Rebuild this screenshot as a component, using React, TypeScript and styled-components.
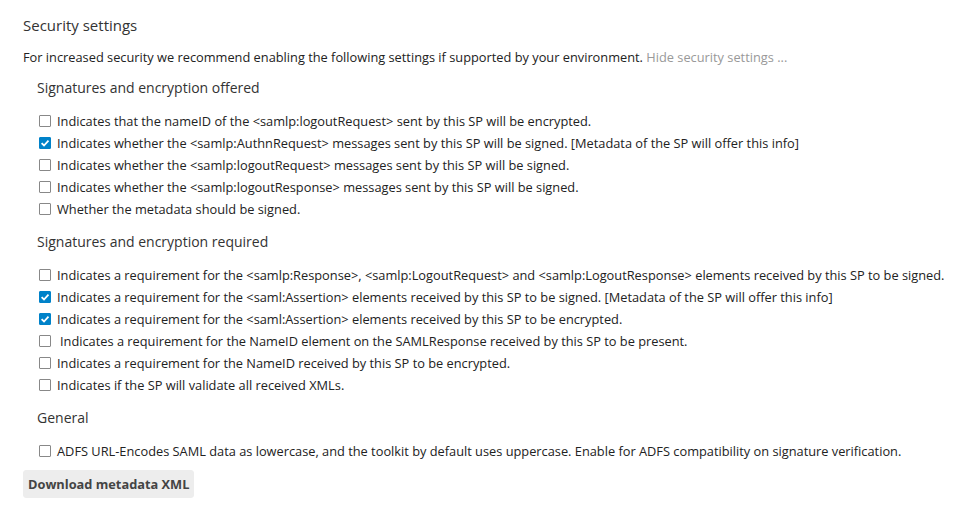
import React from "react";
import styled, { createGlobalStyle } from "styled-components";

const Global = createGlobalStyle`
  html, body { margin: 0; padding: 0; background: #fff; }
  body { font-family: "Open Sans", "Noto Sans", sans-serif; font-size: 12.8px; color: #222; }
`;

const Section = styled.div`
  padding: 14px 23px 0 23px;
`;

const Title = styled.h2`
  margin: 0 0 10px 0;
  font-size: 15px;
  font-weight: 400;
  line-height: 22px;
  color: #333;
`;

const Intro = styled.p`
  margin: 0 0 9px 0;
  line-height: 22px;
`;

const HideLink = styled.a`
  color: #999;
  text-decoration: none;
  cursor: pointer;
`;

const Group = styled.div`
  padding-left: 14px;
`;

const GroupTitle = styled.h3`
  margin: 0 0 11px 0;
  font-size: 14px;
  font-weight: 400;
  line-height: 22px;
  color: #333;
`;

const List = styled.div`
  display: flex;
  flex-direction: column;
  margin-bottom: 11px;
`;

const Row = styled.label`
  display: flex;
  align-items: center;
  height: 22px;
  padding-left: 2px;
  gap: 6px;
  white-space: nowrap;
`;

const Box = styled.span<{ $checked: boolean }>`
  flex: none;
  width: 12px;
  height: 12px;
  box-sizing: border-box;
  border: 1px solid ${(p) => (p.$checked ? "#0082c9" : "#888")};
  background: ${(p) => (p.$checked ? "#0082c9" : "#fff")};
  border-radius: 1px;
  display: flex;
  align-items: center;
  justify-content: center;
`;

const Text = styled.span<{ $indent?: boolean }>`
  padding-left: ${(p) => (p.$indent ? "3px" : "0")};
`;

const Button = styled.button`
  display: block;
  margin-top: -3px;
  font-family: inherit;
  font-size: 12.8px;
  font-weight: 700;
  color: #444;
  background: #ededed;
  border: 1px solid #ededed;
  border-radius: 3px;
  height: 28px;
  padding: 0 4px;
`;

const Check = ({ checked }: { checked: boolean }) => (
  <Box $checked={checked}>
    {checked && (
      <svg width="10" height="10" viewBox="0 0 10 10">
        <path d="M1.6 5.2 L4 7.5 L8.5 2.6" fill="none" stroke="#fff" strokeWidth="1.8" />
      </svg>
    )}
  </Box>
);

type Item = { text: string; checked?: boolean; indent?: boolean };

const offered: Item[] = [
  { text: "Indicates that the nameID of the <samlp:logoutRequest> sent by this SP will be encrypted." },
  { text: "Indicates whether the <samlp:AuthnRequest> messages sent by this SP will be signed. [Metadata of the SP will offer this info]", checked: true },
  { text: "Indicates whether the <samlp:logoutRequest> messages sent by this SP will be signed." },
  { text: "Indicates whether the <samlp:logoutResponse> messages sent by this SP will be signed." },
  { text: "Whether the metadata should be signed." },
];

const required: Item[] = [
  { text: "Indicates a requirement for the <samlp:Response>, <samlp:LogoutRequest> and <samlp:LogoutResponse> elements received by this SP to be signed." },
  { text: "Indicates a requirement for the <saml:Assertion> elements received by this SP to be signed. [Metadata of the SP will offer this info]", checked: true },
  { text: "Indicates a requirement for the <saml:Assertion> elements received by this SP to be encrypted.", checked: true },
  { text: "Indicates a requirement for the NameID element on the SAMLResponse received by this SP to be present.", indent: true },
  { text: "Indicates a requirement for the NameID received by this SP to be encrypted." },
  { text: "Indicates if the SP will validate all received XMLs." },
];

const general: Item[] = [
  { text: "ADFS URL-Encodes SAML data as lowercase, and the toolkit by default uses uppercase. Enable for ADFS compatibility on signature verification." },
];

const Items = ({ items }: { items: Item[] }) => (
  <List>
    {items.map((it, i) => (
      <Row key={i}>
        <Check checked={!!it.checked} />
        <Text $indent={it.indent}>{it.text}</Text>
      </Row>
    ))}
  </List>
);

export default function App() {
  return (
    <>
      <Global />
      <Section>
        <Title>Security settings</Title>
        <Intro>
          For increased security we recommend enabling the following settings if supported by your environment.{" "}
          <HideLink>Hide security settings ...</HideLink>
        </Intro>
        <Group>
          <GroupTitle>Signatures and encryption offered</GroupTitle>
          <Items items={offered} />
          <GroupTitle>Signatures and encryption required</GroupTitle>
          <Items items={required} />
          <GroupTitle>General</GroupTitle>
          <Items items={general} />
        </Group>
        <Button>Download metadata XML</Button>
      </Section>
    </>
  );
}
